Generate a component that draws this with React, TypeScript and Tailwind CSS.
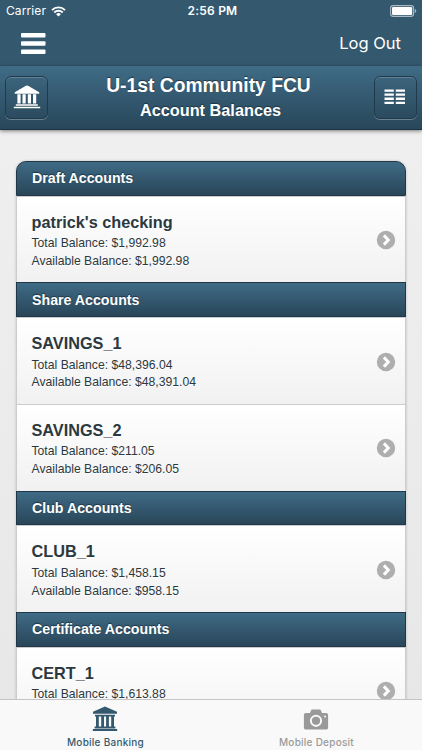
import React from 'react';

interface Account {
  name: string;
  total: string;
  available: string;
}

interface AccountGroup {
  title: string;
  accounts: Account[];
}

const groups: AccountGroup[] = [
  {
    title: 'Draft Accounts',
    accounts: [{ name: "patrick's checking", total: '$1,992.98', available: '$1,992.98' }],
  },
  {
    title: 'Share Accounts',
    accounts: [
      { name: 'SAVINGS_1', total: '$48,396.04', available: '$48,391.04' },
      { name: 'SAVINGS_2', total: '$211.05', available: '$206.05' },
    ],
  },
  {
    title: 'Club Accounts',
    accounts: [{ name: 'CLUB_1', total: '$1,458.15', available: '$958.15' }],
  },
  {
    title: 'Certificate Accounts',
    accounts: [{ name: 'CERT_1', total: '$1,613.88', available: '' }],
  },
];

const WifiIcon = () => (
  <svg width="15" height="11" viewBox="0 0 15 11" fill="none" stroke="white" strokeWidth="1.9">
    <path d="M1 4.1a9.2 9.2 0 0 1 13 0" />
    <path d="M3.3 6.5a6 6 0 0 1 8.4 0" />
    <path d="M7.5 10.6 5.1 8.2a3.4 3.4 0 0 1 4.8 0z" fill="white" stroke="none" />
  </svg>
);

const BatteryIcon = () => (
  <svg width="27" height="12" viewBox="0 0 27 12">
    <rect x="0.6" y="0.6" width="23" height="10.8" rx="2.6" fill="none" stroke="#a9bac4" strokeWidth="1.1" />
    <rect x="2" y="2" width="20.2" height="8" rx="1.2" fill="white" />
    <path d="M24.8 4v4c.9-.4 1.4-1.1 1.4-2s-.5-1.6-1.4-2z" fill="#a9bac4" />
  </svg>
);

const BankIcon = () => (
  <svg width="28" height="24" viewBox="0 0 28 24" fill="white">
    <path d="M14 0.6c.5 0 1 .2 1.5.5L26.2 7.3v1.4H1.8V7.3L12.5 1.1c.5-.3 1-.5 1.5-.5z" />
    <path d="M4.4 9.3h3.2v9.2H4.4zM9.5 9.3h3.2v9.2H9.5zM14.8 9.3H18v9.2h-3.2zM20 9.3h3.2v9.2H20z" />
    <path d="M2.8 19.2h22v1.6h-22zM0.8 21.7h26.4v1.6H0.8z" />
  </svg>
);

const GridIcon = () => (
  <svg width="22" height="16" viewBox="0 0 22 16" fill="white">
    <path d="M0.5 0.4h9.3v2.3H0.5zM11.8 0.4H21v2.3h-9.2zM0.5 4.5h9.3v2.3H0.5zM11.8 4.5H21v2.3h-9.2zM0.5 8.6h9.3v2.3H0.5zM11.8 8.6H21v2.3h-9.2zM0.5 12.7h9.3V15H0.5zM11.8 12.7H21V15h-9.2z" />
  </svg>
);

const BankTabIcon = () => (
  <svg width="26" height="26" viewBox="0 0 26 26" fill="#34596f">
    <path d="M13 0.6 25 5.8v2H1v-2z" />
    <path d="M3 8.7h20v1.9H3zM4 10.5h2.8V21H4zM9.2 10.5H12V21H9.2zM14.1 10.5h2.8V21h-2.8zM19.2 10.5H22V21h-2.8z" />
    <path d="M2.6 20.6h20.8v1.8H2.6zM0.8 23h24.4v2H0.8z" />
  </svg>
);

const CameraIcon = () => (
  <svg width="26" height="22" viewBox="0 0 26 22">
    <path
      d="M3 4h4l1-2.5C8.3.8 8.8.6 9.5.6h7c.7 0 1.2.2 1.5.9L19 4h4c1.3 0 2.1.8 2.1 2.1v12.3c0 1.3-.8 2.1-2.1 2.1H3c-1.3 0-2.1-.8-2.1-2.1V6.1C.9 4.8 1.7 4 3 4z"
      fill="#999"
    />
    <circle cx="13" cy="11.8" r="5.1" fill="none" stroke="#f9f9f9" strokeWidth="2" />
    <circle cx="22" cy="7.5" r="1" fill="#f9f9f9" />
  </svg>
);

const ChevronBadge = () => (
  <svg width="20" height="20" viewBox="0 0 20 20" className="shrink-0">
    <circle cx="10" cy="10" r="9.2" fill="#aeaeae" />
    <path d="M7.9 5.4 12.3 10l-4.4 4.6" fill="none" stroke="white" strokeWidth="3" />
  </svg>
);

const HeaderButton: React.FC<{ children: React.ReactNode }> = ({ children }) => (
  <button className="w-[43px] h-[43px] flex items-center justify-center rounded-[6px] border border-[#203a4b] bg-linear-to-b from-[#3b647c] to-[#2b4b5f] shadow-[0_1px_0_rgba(255,255,255,0.3),inset_0_1px_0_rgba(255,255,255,0.2)]">
    {children}
  </button>
);

const AccountRow: React.FC<{ account: Account }> = ({ account }) => (
  <li className="h-[86.8px] flex items-start justify-between pl-[15px] pr-[9.5px] border-x border-t border-[#ccc] bg-linear-to-b from-white to-[#f1f1f1] text-[#2b3840] [text-shadow:0_1px_0_#fff]">
    <div className="pt-[15px] whitespace-nowrap">
      <h3 className="text-[16.25px] leading-[21px] font-bold">{account.name}</h3>
      <p className="mt-[2.5px] text-[12.2px] leading-[17.6px]">Total Balance: {account.total}</p>
      {account.available && (
        <p className="text-[12.2px] leading-[17.6px]">Available Balance: {account.available}</p>
      )}
    </div>
    <div className="pt-[33.5px]">
      <ChevronBadge />
    </div>
  </li>
);

const App: React.FC = () => {
  return (
    <div className="w-[422px] h-[750px] flex flex-col overflow-hidden bg-linear-to-b from-[#f1f1f1] to-[#e7e7e7] font-['Liberation_Sans',Arial,sans-serif]">
      {/* Status Bar */}
      <div className="h-[22px] shrink-0 grid grid-cols-3 items-center px-[6px] bg-[#34596f] text-white font-['Inter',sans-serif]">
        <div className="flex items-center gap-[5px] text-[12px] tracking-[0.1px]">
          Carrier
          <WifiIcon />
        </div>
        <div className="pl-[3px] text-center text-[12px] font-semibold tracking-[0.2px] whitespace-nowrap">2:56 PM</div>
        <div className="flex justify-end -mr-[1px]">
          <BatteryIcon />
        </div>
      </div>

      {/* Nav Bar */}
      <div className="h-[44px] shrink-0 flex items-center justify-between pb-[1px] pl-[20.5px] pr-[21px] bg-[#34596f] text-white">
        <button className="pb-[1px]">
          <svg width="25" height="21" viewBox="0 0 25 21" fill="white">
            <rect x="0" y="0" width="24.5" height="4.5" rx="1" />
            <rect x="0" y="8.2" width="24.5" height="4.5" rx="1" />
            <rect x="0" y="16.4" width="24.5" height="4.5" rx="1" />
          </svg>
        </button>
        <button className="pb-[1px] text-[16.5px] leading-[20px] font-['Inter',sans-serif]">Log Out</button>
      </div>

      {/* Page Header */}
      <header className="relative h-[64px] shrink-0 flex items-center justify-between px-[5px] pb-[1px] border-b border-[#1d3444] bg-linear-to-b from-[#406c87] to-[#28475a] text-white shadow-[0_1px_4px_rgba(0,0,0,0.5)]">
        <HeaderButton>
          <BankIcon />
        </HeaderButton>
        <div className="pr-[5px] pt-[2px] text-center font-bold whitespace-nowrap [text-shadow:0_-1px_1px_#1d3444]">
          <h1 className="text-[19.3px] leading-[24px]">U-1st Community FCU</h1>
          <h2 className="pl-[4px] text-[16.3px] leading-[24px]">Account Balances</h2>
        </div>
        <HeaderButton>
          <GridIcon />
        </HeaderButton>
      </header>

      {/* Account List */}
      <main className="flex-1 min-h-0 overflow-hidden pt-[31px] pl-[15.5px] pr-[16px]">
        <div className="rounded-t-[10px] shadow-[0_0_3px_rgba(0,0,0,0.2)]">
          {groups.map((group) => (
            <section key={group.title} className="group">
              <h2 className="h-[34.7px] flex items-center px-[15.5px] pt-[1px] border border-[#1f3747] group-first:rounded-t-[10px] bg-linear-to-b from-[#3f6b86] to-[#294659] text-[14.2px] font-bold text-white [text-shadow:0_-1px_1px_#1d3444]">
                {group.title}
              </h2>
              <ul>
                {group.accounts.map((account) => (
                  <AccountRow key={account.name} account={account} />
                ))}
              </ul>
            </section>
          ))}
        </div>
      </main>

      {/* Tab Bar */}
      <nav className="relative h-[51px] shrink-0 grid grid-cols-2 border-t border-[#c4c4c4] bg-[#f9f9f9] text-[10px] leading-[12px] font-medium tracking-[0.25px] font-['Inter',sans-serif]">
        <button className="flex flex-col items-center justify-start pt-[6px] text-[#34596f]">
          <span className="h-[30px] pr-[1px]">
            <BankTabIcon />
          </span>
          Mobile Banking
        </button>
        <button className="flex flex-col items-center justify-start pt-[6px] text-[#999]">
          <span className="h-[30px] pt-[3px] pr-[1px]">
            <CameraIcon />
          </span>
          Mobile Deposit
        </button>
      </nav>
    </div>
  );
};

export default App;
